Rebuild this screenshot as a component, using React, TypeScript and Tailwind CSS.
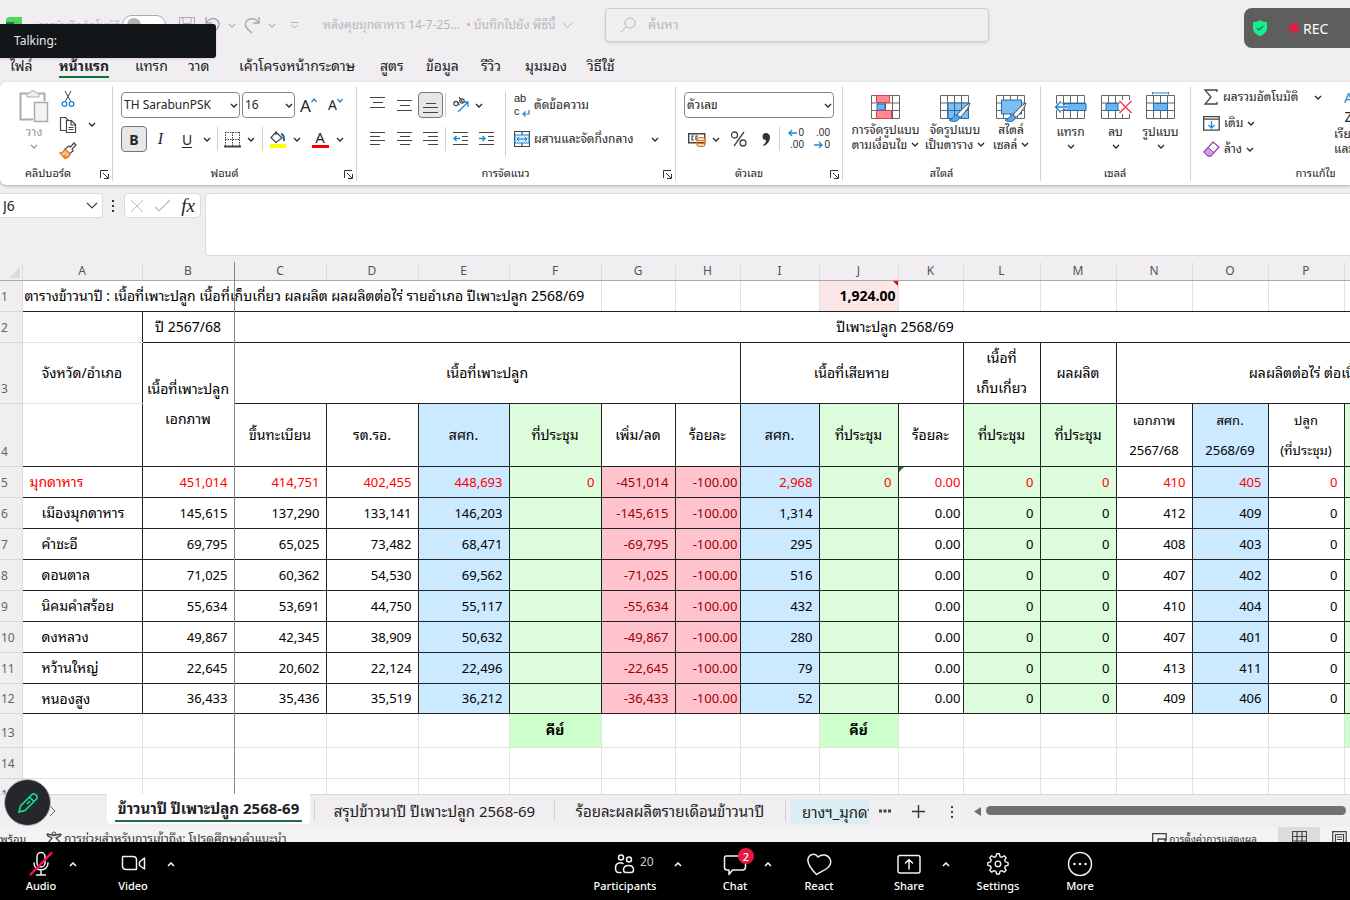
import type { ReactNode } from "react";
import clsx from "clsx";

const ui = "font-['Noto_Sans','Noto_Sans_Thai_Looped','Loma','Garuda','Waree',sans-serif]";

function Chevron({ className = "" }: { className?: string }) {
  return (
    <svg width="8" height="5" viewBox="0 0 8 5" className={clsx("shrink-0", className)} aria-hidden="true">
      <path d="M1 1l3 3 3-3" fill="none" stroke="currentColor" strokeWidth="1.3" />
    </svg>
  );
}

function Drop({ label, className = "w-3" }: { label: string; className?: string }) {
  return (
    <button aria-label={label} className={clsx("flex h-6 shrink-0 items-center justify-center", className)}>
      <Chevron />
    </button>
  );
}

function Icon({ w = 18, h = 18, box, children }: { w?: number; h?: number; box?: string; children: ReactNode }) {
  return (
    <svg width={w} height={h} viewBox={box ?? `0 0 ${w} ${h}`} fill="none" stroke="#444" className="shrink-0" aria-hidden="true">
      {children}
    </svg>
  );
}

function Tool({ label, className = "w-[27px]", active, children }: { label: string; className?: string; active?: boolean; children: ReactNode }) {
  return (
    <button
      aria-label={label}
      className={clsx(
        "flex h-[26px] shrink-0 items-center justify-center",
        active && "rounded border border-[#777] bg-[#e8e6e8]",
        className
      )}
    >
      {children}
    </button>
  );
}

function Rule({ className = "h-6 mx-1" }: { className?: string }) {
  return <span className={clsx("w-px shrink-0 bg-[#d0d0d0]", className)} />;
}

function Group({ name, launcher, className, children }: { name: string; launcher?: boolean; className: string; children: ReactNode }) {
  return (
    <section aria-label={name} className={clsx("relative my-1 flex h-[95px] shrink-0 flex-col border-r border-[#d4d4d4] pt-[6px]", className)}>
      {children}
      <div className={clsx("mt-auto flex h-4 items-center justify-center text-[11px] leading-4", launcher ? "pr-7" : "pr-2")}>{name}</div>
      {launcher && (
        <button aria-label={`${name} ...`} className="absolute right-[3px] bottom-0.5">
          <Icon w={9} h={9}>
            <path d="M.5 8V.5H8M3 3l5 5M8.500 4v4.500H4" stroke="#333" />
          </Icon>
        </button>
      )}
    </section>
  );
}

function Lines({ rows }: { rows: number[][] }) {
  return (
    <Icon w={16} h={16}>
      {rows.map(([y, a, b]) => (
        <path key={y} d={`M${a} ${y}.5H${b}`} stroke="#444" strokeWidth="1.2" />
      ))}
    </Icon>
  );
}

function Grid({ children }: { children?: ReactNode }) {
  return (
    <Icon w={34} h={30}>
      <path d="M2.500 3.500h28v23h-28zM2.500 11h28M2.500 18.500h28M9.500 3.500v23M16.500 3.500v23M23.500 3.500v23" stroke="#666" />
      {children}
    </Icon>
  );
}

const brush = (
  <>
    <path d="M32 11c-4 2-10 8-13 12l3 2.500c4-4 9-10 10-14.500z" fill="#fff" stroke="#444" />
    <path d="M19 23c-4 0-3 4-8 5 3 3 9 2 11-2.500z" fill="#5aa9e6" stroke="#1f6fb5" />
  </>
);

function BigButton({ lines, icon, className, below }: { lines: string[]; icon: ReactNode; className: string; below?: boolean }) {
  return (
    <button className={clsx("flex shrink-0 flex-col items-center text-[12px] leading-[15px] whitespace-nowrap", className)}>
      {icon}
      <span className={clsx("block", below && "mt-0.5")}>{lines[0]}</span>
      <span className={clsx("flex items-center gap-1", below && "h-[15px]")}>
        {lines[1]}
        <Chevron />
      </span>
    </button>
  );
}

const menu: [string, string][] = [
  ["ไฟล์", "w-[49px]"],
  ["หน้าแรก", "w-[76px]"],
  ["แทรก", "w-[53px]"],
  ["วาด", "w-[51px]"],
  ["เค้าโครงหน้ากระดาษ", "w-[141px]"],
  ["สูตร", "w-[46px]"],
  ["ข้อมูล", "w-[55px]"],
  ["รีวิว", "w-[44px]"],
  ["มุมมอง", "w-[62px]"],
  ["วิธีใช้", "w-[60px]"],
];

function TitleBar() {
  return (
    <header className="relative">
      <div className="flex h-[50px] items-center pl-1.5 text-[12px] text-[#b9b6b9]">
        <Icon w={16} h={16}>
          <path d="M2 0h14v8H0V2z" fill="#5ad15a" stroke="none" />
          <path d="M0 5h8v11H0z" fill="#14804a" stroke="none" />
        </Icon>
        <span className="ml-4 w-[74px] text-[11px] whitespace-nowrap">การบันทึกอัตโนมัติ</span>
        <span className="ml-2.5 flex h-5 w-11 shrink-0 items-center rounded-full border border-[#aaa] bg-white pl-1">
          <span className="size-3.5 rounded-full bg-[#b5b3b5]" />
        </span>
        <span className="ml-3 flex w-[112px] shrink-0 items-center gap-[7px]">
          <Icon w={18} h={18}>
            <path d="M1.500 1.500h15v15h-15zM5 1.500v6h8v-6M5 16v-5h8v5" stroke="#b0aeb0" />
          </Icon>
          <Icon w={18} h={18}>
            <path d="M3 1v6h6M3 7c3-5 9-6 12-2s0 7-5 12" stroke="#a9a7a9" strokeWidth="1.4" />
          </Icon>
          <Chevron />
          <Icon w={18} h={18}>
            <path d="M16 1v6h-6M16 7C12 1 5 2 3 6s1 7 6 11" stroke="#a9a7a9" strokeWidth="1.4" />
          </Icon>
          <Chevron />
        </span>
        <Icon w={9} h={7}>
          <path d="M1 .5h7M1.500 3l3 3 3-3" stroke="#b0aeb0" />
        </Icon>
        <span className="ml-6 flex items-center gap-1.5 whitespace-nowrap">
          <span>หลังคุยมุกดาหาร 14-7-25...&nbsp; • บันทึกไปยัง พีซีนี้</span>
          <svg width="11" height="7" aria-hidden="true"><path d="M1 1l4.500 4.500L10 1" fill="none" stroke="currentColor" /></svg>
        </span>
        <label className="absolute left-[605px] flex h-[34px] w-[384px] items-center rounded-[4px] border border-[#cfcdcf] px-3.5 shadow-sm">
          <Icon w={16} h={16}>
            <path d="M15 6a5 5 0 1 1-10 0 5 5 0 0 1 10 0zM6.500 9.500L1 15" stroke="#b9b6b9" />
          </Icon>
          <input aria-label="ค้นหา" placeholder="ค้นหา" className="ml-3 w-full bg-transparent text-[13px] outline-none placeholder:text-[#b9b6b9]" />
        </label>
      </div>
      <nav className="flex h-8 items-center pl-[10px] text-[14px] leading-5 whitespace-nowrap">
        {menu.map(([m, w], i) => (
          <div key={m} className={clsx("shrink-0", w)}>
            <button className={clsx(i === 1 && "border-b-2 border-[#0f703b] pt-0.5 font-bold")}>{m}</button>
          </div>
        ))}
      </nav>
      <div className="absolute top-6 left-0 flex h-[34px] w-[216px] items-center rounded-r-[3px] bg-[#121618] pl-3.5 text-[12px] text-[#e8e8e8] shadow">
        Talking:
      </div>
      <div className="absolute top-2 right-0 flex h-10 w-[106px] items-center rounded-l-lg bg-[#5e5e5e] pl-2 text-[14px] text-white">
        <Icon w={16} h={18}>
          <path d="M8 1c2 1.500 4 2 7 2v6c0 4-3 6.500-7 8-4-1.500-7-4-7-8V3c3 0 5-.5 7-2z" fill="#14f08c" stroke="none" />
          <path d="M5 9l2 2 4-4" stroke="#2b6b4c" strokeWidth="1.200" />
        </Icon>
        <span className="mr-1 ml-[21px] size-[10px] shrink-0 rounded-full bg-[#dc1f3c]" />
        REC
      </div>
    </header>
  );
}

function Ribbon() {
  return (
    <div className="relative z-10 flex h-[103px] shrink-0 overflow-hidden rounded-l-md bg-white text-[12px] text-[#262626] shadow-[0_1px_3px_#aaa]">
      <Group name="คลิปบอร์ด" launcher className="w-[113px] pl-3">
        <div className="-mt-1.5 flex pl-1">
          <button className="flex w-9 flex-col items-center pt-1 text-[#999]">
            <Icon w={30} h={34}>
              <path d="M8 3.500H1.500v26H14M20 3.500h5.500V11" stroke="#aaa" strokeWidth="2" />
              <path d="M8 7V3h3c0-3 6-3 6 0h3v4z" fill="#eee" stroke="#aaa" />
              <path d="M15.500 12.500h13v19h-13z" fill="#f3f3f3" stroke="#aaa" strokeWidth="1.500" />
            </Icon>
            <span className="leading-4">วาง</span>
            <Chevron className="mt-1" />
          </button>
          <div className="flex w-8 flex-col items-center">
            <Tool label="ตัด">
              <Icon w={14} h={18}>
                <path d="M4 1l6 11M10 1L4 12" />
                <circle cx="3.500" cy="14" r="2.300" stroke="#1b87d6" strokeWidth="1.300" />
                <circle cx="10.500" cy="14" r="2.300" stroke="#1b87d6" strokeWidth="1.300" />
              </Icon>
            </Tool>
            <Tool label="คัดลอก">
              <Icon w={18} h={18}>
                <path d="M7 14.500H1.500v-13h5l3 3M7.500 4.500h5l4 4v8h-9zM12 5v4h4M9.500 11.500h5M9.500 13.500h5" strokeWidth="1.200" />
              </Icon>
            </Tool>
            <Tool label="ตัวคัดวางรูปแบบ">
              <Icon w={18} h={18}>
                <path d="M15 1l2 2-4 4 1 2-4 3-4-5 4-3 1.500 1z" fill="#fff" strokeWidth="1.200" />
                <path d="M6 7l5 5c-1 3-3 4-5 4.500L1 11c2 0 4-2 5-4zM5 15l2-2" fill="#f7c48d" stroke="#e0761b" strokeWidth="1.300" />
              </Icon>
            </Tool>
          </div>
          <Drop label="คัดลอก ตัวเลือก" className="mt-[26px] w-4" />
        </div>
      </Group>

      <Group name="ฟอนต์" launcher className="w-[244px] pl-2">
        <div className="mb-2 flex items-center">
          <label className="relative mr-0.5 flex items-center">
            <select aria-label="ฟอนต์" className="h-[26px] w-[119px] appearance-none rounded border border-[#888] bg-white pl-0.5 text-[12px]">
              <option>TH SarabunPSK</option>
            </select>
            <Chevron className="absolute right-0.5" />
          </label>
          <label className="relative flex items-center">
            <select aria-label="ขนาด" className="h-[26px] w-[53px] appearance-none rounded border border-[#888] bg-white pl-0.5 text-[12px]">
              <option>16</option>
            </select>
            <Chevron className="absolute right-0.5" />
          </label>
          <Tool label="เพิ่มขนาด">
            <span className="text-[17px] leading-none">A</span>
            <svg width="6" height="5" className="-mt-2.5" aria-hidden="true"><path d="M.5 4L3 1l2.500 3" fill="none" stroke="#1b87d6" strokeWidth="1.300" /></svg>
          </Tool>
          <Tool label="ลดขนาด">
            <span className="text-[14px] leading-none">A</span>
            <svg width="6" height="5" className="-mt-2.5" aria-hidden="true"><path d="M.5 1L3 4l2.500-3" fill="none" stroke="#1b87d6" strokeWidth="1.300" /></svg>
          </Tool>
        </div>
        <div className="flex items-center">
          <Tool label="ตัวหนา" active className="w-[26px]"><b className="text-[14px]">B</b></Tool>
          <Tool label="ตัวเอียง"><i className="font-['Liberation_Serif',serif] text-[16px]">I</i></Tool>
          <Tool label="ขีดเส้นใต้" className="w-[26px]"><span className="text-[14px] underline underline-offset-2">U</span></Tool>
          <Drop label="แบบขีดเส้นใต้" className="w-3.5" />
          <Rule className="mx-[3px] h-6" />
          <Tool label="เส้นขอบ" className="w-[22px]">
            <Icon w={17} h={17}>
              <path d="M1 1.500h15M1.500 1v14M15.500 1v14M8.500 1v14M1 8.500h15" strokeDasharray="1.500 1" />
              <path d="M0 15.500h17" strokeWidth="1.800" />
            </Icon>
          </Tool>
          <Drop label="เส้นขอบ ตัวเลือก" className="w-4" />
          <Rule className="mx-[3px] h-6" />
          <Tool label="สีเติม" className="w-6">
            <Icon w={18} h={18}>
              <path d="M7 2l6 6-6 4.500-5-5zM7 5V1" fill="#fff" strokeWidth="1.200" />
              <path d="M12 4c3 0 3 3 3 7" stroke="#1f5fa0" strokeWidth="1.800" />
              <path d="M1 14h16v4H1z" fill="#ff0" stroke="none" />
            </Icon>
          </Tool>
          <Drop label="สีเติม ตัวเลือก" className="w-3.5" />
          <Tool label="สีฟอนต์" className="w-8">
            <span className="w-[17px] border-b-[3px] border-[#f00] text-center text-[15px] leading-[15px]">A</span>
          </Tool>
          <Drop label="สีฟอนต์ ตัวเลือก" className="w-2" />
        </div>
      </Group>

      <Group name="การจัดแนว" launcher className="w-[319px] pl-[7px]">
        <div className="flex">
          <div className="flex flex-col gap-2">
            <div className="flex items-center">
              <Tool label="ชิดบน"><Lines rows={[[0, 0, 15], [5, 3, 13], [10, 0, 15]]} /></Tool>
              <Tool label="กึ่งกลางแนวตั้ง"><Lines rows={[[3, 0, 15], [8, 3, 13], [13, 0, 15]]} /></Tool>
              <Tool label="ชิดล่าง" active className="w-[25px]"><Lines rows={[[6, 3, 13], [10, 0, 15], [15, 0, 15]]} /></Tool>
              <Rule className="mr-0.5 ml-0.5 h-6" />
              <Tool label="การวางแนว" className="w-[25px]">
                <Icon w={18} h={18}>
                  <g stroke="#444" strokeWidth="1.200">
                    <circle cx="4" cy="7.500" r="2.200" />
                    <path d="M5.500 6l2 3M7 1l4 6" />
                    <circle cx="10" cy="5" r="2.200" />
                  </g>
                  <path d="M6 16L16 6M11 6h5v5" stroke="#1b87d6" strokeWidth="1.300" />
                </Icon>
              </Tool>
              <Drop label="การวางแนว ตัวเลือก" />
            </div>
            <div className="flex items-center">
              <Tool label="ชิดซ้าย"><Lines rows={[[1, 0, 15], [5, 0, 10], [9, 0, 15], [13, 0, 10]]} /></Tool>
              <Tool label="กึ่งกลาง"><Lines rows={[[1, 0, 15], [5, 3, 13], [9, 0, 15], [13, 3, 13]]} /></Tool>
              <Tool label="ชิดขวา" className="w-[25px]"><Lines rows={[[1, 0, 15], [5, 5, 15], [9, 0, 15], [13, 5, 15]]} /></Tool>
              <Rule className="mr-0.5 ml-0.5 h-6" />
              <Tool label="ลดการเยื้อง" className="w-[25px]">
                <Icon w={16} h={16}>
                  <path d="M0 1.500h15M9 5.500h6M9 9.500h6M0 13.500h15" strokeWidth="1.200" />
                  <path d="M7 7.500H1M3.500 5L1 7.500 3.500 10" stroke="#1b87d6" strokeWidth="1.300" />
                </Icon>
              </Tool>
              <Tool label="เพิ่มการเยื้อง">
                <Icon w={16} h={16}>
                  <path d="M0 1.500h15M9 5.500h6M9 9.500h6M0 13.500h15" strokeWidth="1.200" />
                  <path d="M0 7.500h6M3.500 5L6 7.500 3.500 10" stroke="#1b87d6" strokeWidth="1.300" />
                </Icon>
              </Tool>
            </div>
          </div>
          <Rule className="ml-[5px] h-[64px]" />
          <div className="flex flex-1 flex-col gap-2 pl-2">
            <button className="flex h-[26px] items-center gap-1 whitespace-nowrap">
              <span className="relative block w-4 text-left font-['Liberation_Sans',sans-serif] text-[11px] leading-[13px]">
                ab
                <br />c
                <svg width="8" height="8" className="absolute right-0 bottom-0" aria-hidden="true"><path d="M7 0v4H1M3.500 1.500L1 4l2.500 2.500" fill="none" stroke="#1b87d6" strokeWidth="1.200" /></svg>
              </span>
              ตัดข้อความ
            </button>
            <div className="flex items-center">
              <button className="flex h-[26px] items-center gap-1 whitespace-nowrap">
                <Icon w={16} h={16}>
                  <path d="M.5.5h15v15H.5zM8 0v16" strokeWidth="1.200" />
                  <path d="M1 4h14v8H1z" fill="#d6ecfa" stroke="#1b87d6" />
                  <path d="M3 8h10M5 6L3 8l2 2M11 6l2 2-2 2" stroke="#1273bd" />
                </Icon>
                ผสานและจัดกึ่งกลาง
              </button>
              <Drop label="ผสาน ตัวเลือก" className="mr-3 ml-auto w-4" />
            </div>
          </div>
        </div>
      </Group>

      <Group name="ตัวเลข" launcher className="w-[167px] pl-2">
        <label className="relative mb-2 flex items-center">
          <select aria-label="ตัวเลข" className="h-[26px] w-[150px] appearance-none rounded border border-[#888] bg-white pl-0.5 text-[12px]">
            <option>ตัวเลข</option>
          </select>
          <Chevron className="absolute right-2.5" />
        </label>
        <div className="flex items-center">
          <Tool label="รูปแบบตัวเลขทางบัญชี" className="w-[26px]">
            <Icon w={18} h={16}>
              <path d="M.7 2.700h16v9H.7z" strokeWidth="1.400" />
              <path d="M6 5H4v4h2M10 5H8v4" strokeWidth="1.200" />
              <path d="M9 8c0-2 8-2 8 0v6c0 2-8 2-8 0zM9 8c0 2 8 2 8 0M9 11c0 2 8 2 8 0" fill="#fbdcb9" stroke="#e0761b" strokeWidth="1.200" />
            </Icon>
          </Tool>
          <Drop label="สกุลเงิน" />
          <Tool label="เปอร์เซ็นต์" className="w-[34px]">
            <Icon w={18} h={18}>
              <circle cx="4.500" cy="5" r="3" strokeWidth="1.300" />
              <circle cx="13" cy="13" r="3" strokeWidth="1.300" />
              <path d="M14 2L4 16" strokeWidth="1.300" />
            </Icon>
          </Tool>
          <Tool label="จุลภาค" className="w-5">
            <Icon w={10} h={15}>
              <path d="M5 1a3.500 3.500 0 1 0 0 7c0 2-1 4-3 5l1 1c4-2 6-5 6-9 0-2-2-4-4-4z" fill="#333" stroke="none" />
            </Icon>
          </Tool>
          <Rule className="mx-[3px] h-6" />
          <Tool label="เพิ่มทศนิยม" className="w-[26px]">
            <span className="relative w-4 text-right font-['Liberation_Sans',sans-serif] text-[10px] leading-3">
              0<br />.00
              <svg width="9" height="8" className="absolute top-0.5 left-0" aria-hidden="true"><path d="M9 4H1M4 1L1 4l3 3" fill="none" stroke="#1b87d6" strokeWidth="1.300" /></svg>
            </span>
          </Tool>
          <Tool label="ลดทศนิยม" className="w-[26px]">
            <span className="relative w-4 text-right font-['Liberation_Sans',sans-serif] text-[10px] leading-3">
              .00<br />0
              <svg width="9" height="8" className="absolute bottom-0.5 left-0" aria-hidden="true"><path d="M0 4h8M5 1l3 3-3 3" fill="none" stroke="#1b87d6" strokeWidth="1.300" /></svg>
            </span>
          </Tool>
        </div>
      </Group>

      <Group name="สไตล์" className="w-[198px] pl-2">
        <div className="flex">
          <BigButton
            className="w-[69px]"
            lines={["การจัดรูปแบบ", "ตามเงื่อนไข"]}
            icon={
              <Grid>
                <path d="M7.500 3.500h13v7h-13zM7.500 18.500h15v8h-15z" fill="#ff8a95" stroke="#e03c4a" />
                <path d="M8 12h8v6H8z" fill="#6db3f2" stroke="#1f6fb5" />
              </Grid>
            }
          />
          <BigButton
            className="w-[70px]"
            lines={["จัดรูปแบบ", "เป็นตาราง"]}
            icon={
              <Grid>
                <path d="M10 11h20.500v15.500H10zM10 18.500h20M16.500 11v15M23.500 11v15" fill="#7fbcf0" stroke="#1f6fb5" />
                {brush}
              </Grid>
            }
          />
          <BigButton
            className="w-[42px]"
            lines={["สไตล์", "เซลล์"]}
            icon={
              <Grid>
                <path d="M7.500 8h20v14h-20z" fill="#7fbcf0" stroke="#1f6fb5" />
                {brush}
              </Grid>
            }
          />
        </div>
      </Group>

      <Group name="เซลล์" className="w-[150px] pl-[7px]">
        <div className="flex">
          <BigButton
            below
            className="w-[45px]"
            lines={["แทรก", ""]}
            icon={
              <Grid>
                <path d="M10 11.500h22v7H10z" fill="#6db3f2" stroke="#1f6fb5" />
                <path d="M14 15H1.500M7 9.500L1.500 15 7 20.500" stroke="#fff" strokeWidth="3" />
                <path d="M14 15H1.500M7 9.500L1.500 15 7 20.500" stroke="#1b87d6" strokeWidth="1.400" />
              </Grid>
            }
          />
          <BigButton
            below
            className="w-[45px]"
            lines={["ลบ", ""]}
            icon={
              <Grid>
                <path d="M7 11.500h12v7H7z" fill="#6db3f2" stroke="#1f6fb5" />
                <path d="M21 8h13v14H21z" fill="#fff" stroke="none" />
                <path d="M20.500 9l12 12M32.500 9l-12 12" stroke="#f0394a" strokeWidth="1.400" />
              </Grid>
            }
          />
          <BigButton
            below
            className="w-[45px]"
            lines={["รูปแบบ", ""]}
            icon={
              <Grid>
                <path d="M9.500 11.500h14v7h-14z" fill="#6db3f2" stroke="#1f6fb5" />
                <path d="M8.500 1h16M8.500 0v2.500M24.500 0v2.500" stroke="#1b87d6" />
              </Grid>
            }
          />
        </div>
      </Group>

      <Group name="การแก้ไข" className="w-[254px] pr-2 pl-3">
        <div className="-mt-2 flex">
          <div className="flex w-[123px] flex-col">
            <div className="flex items-center">
              <button className="flex h-[26px] items-center gap-1 whitespace-nowrap">
                <Icon w={16} h={16}><path d="M14 3V1H2l6 7-6 7h12v-2" strokeWidth="1.300" /></Icon>
                ผลรวมอัตโนมัติ
              </button>
              <Drop label="ผลรวม ตัวเลือก" className="ml-auto w-4" />
            </div>
            <button className="flex h-[26px] items-center gap-1 whitespace-nowrap">
              <Icon w={17} h={16}>
                <path d="M.7 1.700h15.500v13.500H.7zM.7 4.200h15.500" strokeWidth="1.300" />
                <path d="M8.500 6v7M5.500 10l3 3 3-3" stroke="#1b87d6" strokeWidth="1.300" />
              </Icon>
              เติม
              <Chevron />
            </button>
            <button className="flex h-[26px] items-center gap-1 whitespace-nowrap">
              <Icon w={17} h={16}>
                <path d="M10 1l6 5-8 9H5L1 11z" fill="#fff" stroke="#8b3fa0" strokeWidth="1.200" />
                <path d="M5 6.500l6 5-3 3.500H5L1 11z" fill="#d79be3" stroke="#8b3fa0" />
              </Icon>
              ล้าง
              <Chevron />
            </button>
          </div>
          <button className="ml-2 flex w-[60px] flex-col items-start text-[12px] leading-[15px] whitespace-nowrap">
            <span className="mt-1 flex h-9 flex-col pl-2.5 text-[14px] leading-[19px]">
              <span className="text-[#1b87d6]">A</span>
              <span>Z</span>
            </span>
            <span className="mt-0.5">เรียงลำดับ</span>
            <span>และกรอง</span>
          </button>
        </div>
      </Group>
    </div>
  );
}

function FormulaBar() {
  return (
    <div className="flex h-[77px] shrink-0 items-start pt-2">
      <div className="flex h-[25px] w-[103px] items-center rounded-r border border-l-0 border-[#dcdadc] bg-white pr-1">
        <input aria-label="Name box" defaultValue="J6" className="w-full min-w-0 pl-[3px] text-[14px] outline-none" />
        <svg width="12" height="7" aria-hidden="true" className="shrink-0"><path d="M1 1l5 5 5-5" fill="none" stroke="#444" strokeWidth="1.200" /></svg>
      </div>
      <span className="flex h-[25px] w-[21px] items-center justify-center text-[#333]">
        <svg width="3" height="12" aria-hidden="true"><path d="M0 0h2v2H0zM0 5h2v2H0zM0 10h2v2H0z" fill="currentColor" /></svg>
      </span>
      <div className="flex h-[25px] w-[77px] items-center justify-around rounded border border-[#dcdadc] bg-white">
        <button aria-label="ยกเลิก"><Icon w={14} h={14}><path d="M1 1l12 12M13 1L1 13" stroke="#bbb" /></Icon></button>
        <button aria-label="ป้อน"><Icon w={17} h={14}><path d="M1 8l4 4L16 1" stroke="#bbb" strokeWidth="1.200" /></Icon></button>
        <button className="font-['Liberation_Serif',serif] text-[19px] leading-5 italic">fx</button>
      </div>
      <input aria-label="Formula bar" className="ml-1 h-[63px] flex-1 rounded-l border border-r-0 border-[#dcdadc] bg-white px-2" />
    </div>
  );
}

const columns = [
  ["A", "w-[120px]"], ["B", "w-[92px]"], ["C", "w-[92px]"], ["D", "w-[92px]"], ["E", "w-[91px]"], ["F", "w-[92px]"],
  ["G", "w-[74px]"], ["H", "w-[65px]"], ["I", "w-[79px]"], ["J", "w-[79px]"], ["K", "w-[65px]"], ["L", "w-[77px]"],
  ["M", "w-[76px]"], ["N", "w-[76px]"], ["O", "w-[76px]"], ["P", "w-[76px]"], ["Q", "w-[76px]"], ["R", "w-[76px]"], ["S", "w-[60px]"],
];

const fill: Record<string, string> = {
  E: "bg-[#cbe9ff]", I: "bg-[#cbe9ff]", O: "bg-[#cbe9ff]",
  F: "bg-[#dcfcdc]", J: "bg-[#dcfcdc]", L: "bg-[#dcfcdc]", M: "bg-[#dcfcdc]", Q: "bg-[#dcfcdc]",
  G: "bg-[#ffc3cd]", H: "bg-[#ffc3cd]",
};

// name, B..P
const rows: string[][] = [
  ["มุกดาหาร", "451,014", "414,751", "402,455", "448,693", "0", "-451,014", "-100.00", "2,968", "0", "0.00", "0", "0", "410", "405", "0"],
  ["เมืองมุกดาหาร", "145,615", "137,290", "133,141", "146,203", "", "-145,615", "-100.00", "1,314", "", "0.00", "0", "0", "412", "409", "0"],
  ["คำชะอี", "69,795", "65,025", "73,482", "68,471", "", "-69,795", "-100.00", "295", "", "0.00", "0", "0", "408", "403", "0"],
  ["ดอนตาล", "71,025", "60,362", "54,530", "69,562", "", "-71,025", "-100.00", "516", "", "0.00", "0", "0", "407", "402", "0"],
  ["นิคมคำสร้อย", "55,634", "53,691", "44,750", "55,117", "", "-55,634", "-100.00", "432", "", "0.00", "0", "0", "410", "404", "0"],
  ["ดงหลวง", "49,867", "42,345", "38,909", "50,632", "", "-49,867", "-100.00", "280", "", "0.00", "0", "0", "407", "401", "0"],
  ["หว้านใหญ่", "22,645", "20,602", "22,124", "22,496", "", "-22,645", "-100.00", "79", "", "0.00", "0", "0", "413", "411", "0"],
  ["หนองสูง", "36,433", "35,436", "35,519", "36,212", "", "-36,433", "-100.00", "52", "", "0.00", "0", "0", "409", "406", "0"],
];

const subHeads: [string, string, string?][] = [
  ["C", "ขึ้นทะเบียน"], ["D", "รต.รอ."], ["E", "สศก."], ["F", "ที่ประชุม"], ["G", "เพิ่ม/ลด"], ["H", "ร้อยละ"],
  ["I", "สศก."], ["J", "ที่ประชุม"], ["K", "ร้อยละ"], ["L", "ที่ประชุม"], ["M", "ที่ประชุม"],
  ["N", "เอกภาพ", "2567/68"], ["O", "สศก.", "2568/69"], ["P", "ปลูก", "(ที่ประชุม)"], ["Q", ""], ["R", ""], ["S", ""],
];

const line = "border border-[#222]";
const faint = "border border-[#e2e2e2]";
const faintRow = "border-y border-[#e2e2e2]";

function RowHead({ n }: { n: number }) {
  return (
    <th scope="row" className="border-r border-b border-[#d8d6d8] bg-[#f0eef0] p-0 pl-px text-left align-bottom text-[12px] font-normal text-[#666]">
      <span className="block leading-[28px]">{n}</span>
    </th>
  );
}

function Sheet() {
  return (
    <div className="relative min-h-0 flex-1 overflow-hidden bg-white">
      <table className="w-[1556px] table-fixed border-collapse text-[14px] leading-[30px] whitespace-nowrap text-black">
        <colgroup>
          <col className="w-[22px]" />
          {columns.map(([c, w]) => <col key={c} className={w} />)}
        </colgroup>
        <thead>
          <tr className="h-[18px] bg-[#f0eef0] text-[12px] leading-[17px] text-[#555]">
            <th className="relative border-b border-[#aaa] p-0">
              <svg width="11" height="11" className="absolute right-0.5 bottom-0.5" aria-hidden="true"><path d="M11 0v11H0z" fill="#dcdadc" /></svg>
            </th>
            {columns.map(([c]) => (
              <th key={c} scope="col" className="border-x border-b border-x-[#dedcde] border-b-[#aaa] p-0 font-normal">{c}</th>
            ))}
          </tr>
        </thead>
        <tbody>
          <tr className="h-[31px]">
            <RowHead n={1} />
            <td colSpan={6} className={clsx(faint, "border-b-[#222] p-0 pl-0.5")}>
              ตารางข้าวนาปี : เนื้อที่เพาะปลูก เนื้อที่เก็บเกี่ยว ผลผลิต ผลผลิตต่อไร่ รายอำเภอ ปีเพาะปลูก 2568/69
            </td>
            {columns.slice(6).map(([c]) => (
              <td key={c} className={clsx(faint, "relative border-b-[#222] p-0 pr-0.5 text-right font-bold", c === "J" && "bg-[#fbe6e8]")}>
                {c === "J" && "1,924.00"}
                {c === "J" && <span className="absolute top-0 right-0 border-t-[5px] border-l-[5px] border-t-[#e00] border-l-transparent" />}
              </td>
            ))}
          </tr>
          <tr className="h-[31px] text-center">
            <RowHead n={2} />
            <td className={clsx(faintRow, "p-0")} />
            <td className={clsx(line, "p-0")}>ปี 2567/68</td>
            <td colSpan={17} className={clsx(line, "p-0")}>ปีเพาะปลูก 2568/69</td>
          </tr>
          <tr className="h-[61px] text-center">
            <RowHead n={3} />
            <td className={clsx(faintRow, "p-0")}>จังหวัด/อำเภอ</td>
            <td rowSpan={2} className={clsx(line, "p-0")}>เนื้อที่เพาะปลูก<br />เอกภาพ</td>
            <td colSpan={6} className={clsx(line, "p-0")}>เนื้อที่เพาะปลูก</td>
            <td colSpan={3} className={clsx(line, "p-0")}>เนื้อที่เสียหาย</td>
            <td className={clsx(line, "p-0")}>เนื้อที่<br />เก็บเกี่ยว</td>
            <td className={clsx(line, "p-0")}>ผลผลิต</td>
            <td colSpan={6} className={clsx(line, "p-0")}>ผลผลิตต่อไร่ ต่อเนื้อที่เพาะปลูก</td>
          </tr>
          <tr className="h-[63px] text-center">
            <RowHead n={4} />
            <td className="border-b border-[#222] p-0" />
            {subHeads.map(([c, t, second]) => (
              <td key={c} className={clsx(line, "p-0", second && "text-[13px]", c !== "G" && c !== "H" && fill[c])}>
                {t}
                {second && <br />}
                {second}
              </td>
            ))}
          </tr>
          {rows.map((r, i) => (
            <tr key={r[0]} className={clsx("text-right text-[13px]", i === 7 ? "h-[30px] leading-[29px]" : "h-[31px]", i === 0 && "text-[#f00]")}>
              <RowHead n={i + 5} />
              <td className={clsx("border-y border-r border-[#222] p-0 text-left text-[14px]", i === 0 ? "pl-[7px]" : "pl-[19px]")}>{r[0]}</td>
              {columns.slice(1).map(([c], j) => (
                <td
                  key={c}
                  className={clsx(
                    line,
                    "relative p-0",
                    c === "H" || c === "K" ? "pr-0.5" : "pr-[6px]",
                    fill[c],
                    (c === "G" || c === "H") && "text-[#9c0006]"
                  )}
                >
                  {r[j + 1]}
                  {c === "K" && i === 0 && <span className="absolute top-0 left-0 border-t-[5px] border-r-[5px] border-t-[#1c7c2c] border-r-transparent" />}
                </td>
              ))}
            </tr>
          ))}
          {[13, 14, 15].map((n) => (
            <tr key={n} className={clsx("text-center font-bold", n === 13 ? "h-[34px]" : "h-[31px]")}>
              <RowHead n={n} />
              {columns.map(([c]) => {
                const key = n === 13 && (c === "F" || c === "J" || c === "Q");
                return (
                  <td key={c} className={clsx(faint, "p-0", n === 13 && "border-t-[#222]", key && "bg-[#ccffcc]")}>
                    {key && "คีย์"}
                  </td>
                );
              })}
            </tr>
          ))}
        </tbody>
      </table>
      {/* frozen pane edge */}
      <span className="absolute inset-y-0 left-[234px] w-px bg-[#888]" />
    </div>
  );
}

function SheetTabs() {
  return (
    <div className="relative flex h-[33px] shrink-0 items-start border-t border-[#d9d7d9] bg-[#f0eef0] text-[15px] leading-5 whitespace-nowrap text-[#222]">
      <span className="w-[107px] shrink-0 pt-1.5 pl-[49px]">
        <svg width="7" height="12" className="mt-1" aria-hidden="true"><path d="M1 1l5 5-5 5" fill="none" stroke="#666" /></svg>
      </span>
      <button className="-mt-px h-[30px] w-[203px] shrink-0 rounded-b bg-white px-2 font-bold">
        <span className="block border-b-2 border-[#256b47] leading-6">ข้าวนาปี ปีเพาะปลูก 2568-69</span>
      </button>
      <Rule className="mt-1.5 ml-1 h-5" />
      <button className="w-[239px] shrink-0 pt-1.5">สรุปข้าวนาปี ปีเพาะปลูก 2568-69</button>
      <Rule className="mt-1.5 h-5" />
      <button className="w-[230px] shrink-0 pt-1.5">ร้อยละผลผลิตรายเดือนข้าวนาปี</button>
      <Rule className="mt-1.5 h-5" />
      <button className="mt-1 ml-1 h-[25px] w-[79px] shrink-0 overflow-hidden rounded-l bg-[#daeef3] pl-3 text-left">ยางฯ_มุกดาหาร</button>
      <button aria-label="แผ่นงานเพิ่มเติม" className="mt-3.5 ml-2.5">
        <svg width="12" height="4" aria-hidden="true"><path d="M0 .5h3v3H0zM4.500.5h3v3h-3zM9 .5h3v3H9z" fill="#444" /></svg>
      </button>
      <button aria-label="แผ่นงานใหม่" className="mt-2.5 ml-[21px]">
        <svg width="13" height="13" aria-hidden="true"><path d="M6.500 0v13M0 6.500h13" stroke="#333" strokeWidth="1.400" /></svg>
      </button>
      <svg width="3" height="12" className="mt-[11px] ml-[26px] shrink-0" aria-hidden="true"><path d="M0 0h2v2H0zM0 5h2v2H0zM0 10h2v2H0z" fill="#444" /></svg>
      <svg width="8" height="9" className="mt-3 ml-5 shrink-0" aria-hidden="true"><path d="M7 0v9L0 4.500z" fill="#727072" /></svg>
      <span className="mt-[11px] mr-1 ml-1 h-[9px] flex-1 rounded-full bg-[#727072]" />
      <button aria-label="Annotate" className="absolute -top-4 left-1 flex size-[47px] items-center justify-center rounded-full border border-[#bbb] bg-[#24272b]">
        <svg width="22" height="22" fill="none" stroke="#19e68c" strokeWidth="1.500" aria-hidden="true">
          <path d="M2 20l1.500-6L15 2.500c1-1 2.500-1 3.500 0l1 1c1 1 1 2.500 0 3.500L8 18.500zM12.500 5l4.500 4.500M10 12l3-3" />
        </svg>
      </button>
    </div>
  );
}

function StatusBar() {
  return (
    <div className="flex h-[15px] shrink-0 items-start overflow-hidden bg-[#f3f3f3] text-[12px] leading-6 whitespace-nowrap text-[#333]">
      <span className="w-[46px] text-[11px]">พร้อม</span>
      <Icon w={16} h={20}>
        <path d="M1 7c0 3 4 3 5 4l-4 5M15 7c0 3-4 3-5 4l4 4M1 7c4 1 10 1 14 0" strokeWidth="1.300" />
        <circle cx="8" cy="7" r="2" />
      </Icon>
      <span className="ml-0.5">การช่วยสำหรับการเข้าถึง: โปรดศึกษาคำแนะนำ</span>
      <span className="ml-auto flex items-start gap-0.5 text-[10px]">
        <Icon w={15} h={18}><path d="M5 16H.7V6.700h13.500v7M6 12h7v4H6z" strokeWidth="1.300" /></Icon>
        การตั้งค่าการแสดงผล
      </span>
      <span className="ml-[21px] flex h-full w-[42px] justify-center bg-[#dddbdd] pt-1">
        <Icon w={15} h={15}><path d="M.5.5h14v14H.5zM.5 5.500h14M.5 10h14M5 .5v14M10 .5v14" strokeWidth="1.200" /></Icon>
      </span>
      <span className="ml-3 flex w-[18px] pt-1">
        <Icon w={15} h={15}><path d="M.7.7h13.500v13.500H.7zM3.500 3.500h8v11h-8zM5 6h5M5 8.500h5" strokeWidth="1.200" /></Icon>
      </span>
    </div>
  );
}

function CallButton({ label, className, more, children }: { label: string; className: string; more?: string; children: ReactNode }) {
  return (
    <div className="flex shrink-0 items-start">
      <button className={clsx("flex flex-col items-center text-[11px] leading-4 font-medium", className)}>
        <span className="relative flex h-[28px] items-center">{children}</span>
        <span>{label}</span>
      </button>
      {more && (
        <button aria-label={`${label} options`} className={clsx("flex h-[28px] items-center justify-center", more)}>
          <svg width="8" height="5" aria-hidden="true"><path d="M1 4l3-3 3 3" fill="none" stroke="#fff" strokeWidth="1.500" /></svg>
        </button>
      )}
    </div>
  );
}

function CallIcon({ children }: { children: ReactNode }) {
  return (
    <svg width="26" height="26" viewBox="0 0 26 26" fill="none" stroke="#f2f2f2" strokeWidth="1.500" strokeLinecap="round" strokeLinejoin="round" aria-hidden="true">
      {children}
    </svg>
  );
}

function CallBar() {
  return (
    <footer className="flex h-[58px] shrink-0 items-start bg-black pt-2 pl-3.5 text-white">
      <CallButton label="Audio" className="w-[54px]" more="w-[10px]">
        <CallIcon>
          <path d="M9 11V5.500a4 4 0 0 1 8 0V12a4 4 0 0 1-8 0zM6 12c0 9 14 9 14 0M13 19v5M8.500 24h9" />
          <path d="M23.500 2L2.500 23.500" stroke="#ff1352" strokeWidth="2.300" />
        </CallIcon>
      </CallButton>
      <span className="w-7" />
      <CallButton label="Video" className="w-[54px]" more="w-[22px]">
        <CallIcon>
          <path d="M3 5.500h10c2 0 3.500 1.500 3.500 3.500v9.500h-10c-2.500 0-4-1.500-4-3.500V6zM19.500 11l5-4v11l-5-3.500z" />
        </CallIcon>
      </CallButton>
      <span className="w-[408px]" />
      <CallButton label="Participants" className="w-[70px]" more="w-[36px]">
        <CallIcon>
          <circle cx="9" cy="6.500" r="2.500" />
          <circle cx="17" cy="8.500" r="2.500" />
          <path d="M11 12.500c-4-2-7.500 0-7.500 4.500 0 3 1 4.500 3 4.500H9M11.500 19c0-3 2-4.500 5-4.500s5 1.500 5 4.500c0 2-1 2.500-2.500 2.500h-5c-1.500 0-2.500-.5-2.500-2.500z" />
        </CallIcon>
        <span className="absolute top-1 left-7 text-[12px] leading-4 font-normal text-[#ccc]">20</span>
      </CallButton>
      <span className="w-3" />
      <CallButton label="Chat" className="w-[54px]" more="w-[12px]">
        <CallIcon>
          <path d="M4 5h18c1 0 1.500.5 1.500 1.500V16c0 2-1 3-3 3h-10L7 23.500V19H5c-1.500 0-2.500-1-2.500-2.500V7c0-1 .5-2 1.500-2z" />
        </CallIcon>
        <span className="absolute -top-0.5 left-4 flex size-4 items-center justify-center rounded-full bg-[#e8173d] text-[11px] leading-none">2</span>
      </CallButton>
      <span className="w-[18px]" />
      <CallButton label="React" className="w-[54px]">
        <CallIcon>
          <path d="M10.500 23.500C6 19 1 13 2 8c1-5 7-6.500 10-2 4-3.500 10-2.500 12 2s-1 8-4 10-6 3-9.500 5.500z" />
        </CallIcon>
      </CallButton>
      <span className="w-9" />
      <CallButton label="Share" className="w-[54px]" more="w-[20px]">
        <CallIcon>
          <rect x="2" y="4.500" width="22" height="17.500" rx="2" />
          <path d="M13 18V9M9.500 12L13 8.500l3.500 3.500" />
        </CallIcon>
      </CallButton>
      <span className="w-[15px]" />
      <CallButton label="Settings" className="w-[54px]">
        <CallIcon>
          <g transform="translate(1 0) scale(.92)">
            <path d="M11.500 3h3l.7 3 2 .8 2.600-1.600 2.100 2.100-1.600 2.600.8 2 2.900.7v3l-2.900.7-.8 2 1.600 2.600-2.100 2.100-2.600-1.600-2 .8-.7 2.800h-3l-.7-2.800-2-.8-2.600 1.600-2.100-2.100 1.600-2.600-.8-2-2.900-.7v-3l2.900-.7.8-2-1.600-2.600 2.100-2.100 2.600 1.600 2-.8z" />
            <circle cx="13" cy="14" r="3" />
          </g>
        </CallIcon>
      </CallButton>
      <span className="w-7" />
      <CallButton label="More" className="w-[54px]">
        <CallIcon>
          <circle cx="13" cy="13" r="11.500" />
          <path d="M7.500 13h.01M13 13h.01M18.500 13h.01" strokeWidth="2.500" />
        </CallIcon>
      </CallButton>
    </footer>
  );
}

export default function App() {
  return (
    <main className={clsx("flex h-screen flex-col overflow-hidden bg-[#f0eef1] text-[#222]", ui)}>
      <TitleBar />
      <Ribbon />
      <FormulaBar />
      <Sheet />
      <SheetTabs />
      <StatusBar />
      <CallBar />
    </main>
  );
}
